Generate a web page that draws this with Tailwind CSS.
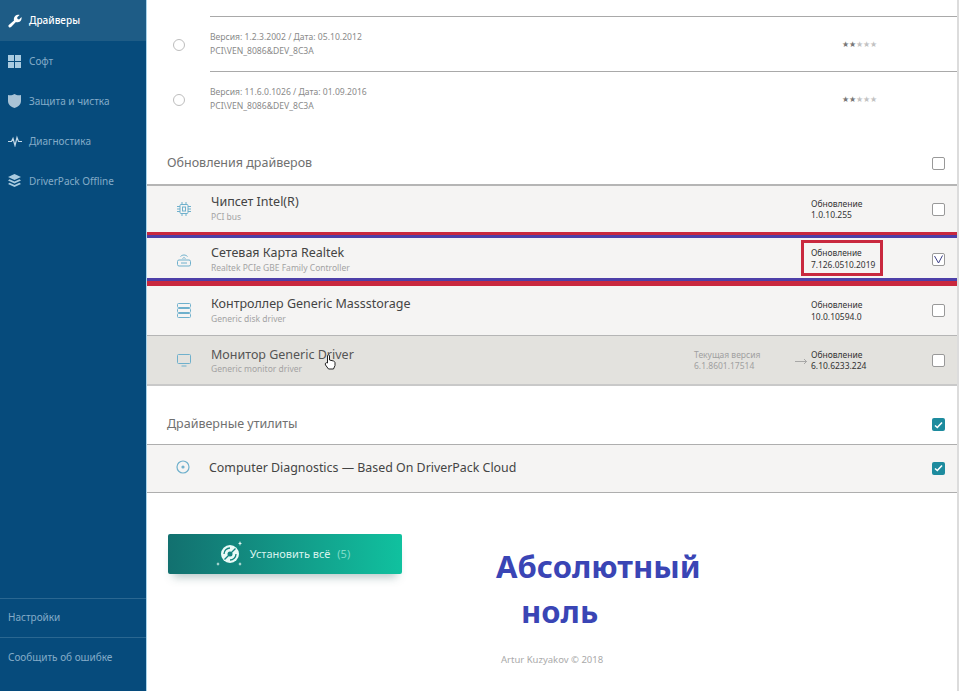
<!doctype html>
<html lang="ru">
<head>
<meta charset="utf-8">
<title>DriverPack</title>
<script src="https://cdn.jsdelivr.net/npm/@tailwindcss/browser@4"></script>
</head>
<body class="bg-white">
<div class="flex h-[691px] w-[959px] overflow-hidden font-['Noto_Sans',sans-serif]">

  <!-- sidebar -->
  <aside class="flex h-full w-[147px] shrink-0 flex-col border-r border-r-[#a9d3ea] bg-[#064b7c] text-[10px] text-[#84abc8]">
    <a class="flex h-[41px] items-center gap-[7px] bg-[#1e5c86] pl-[8px] font-medium text-white">
      <svg width="14" height="14" viewBox="0 0 14 14" fill="#fff"><path d="M1 13.2c-.8-.7-.8-1.500-.2-2.100L6 6.400C5.500 4.200 6.500 1.500 9.800.800c.7-.1 1.300 0 1.800.2L9.200 3.300l.3 1.700 1.600.4 2.400-2.400c.5 2.500-.9 5-3.700 5.300-.7.1-1.300 0-1.900-.2l-4.800 5c-.7.6-1.400.6-2.100.1z"/></svg>
      Драйверы
    </a>
    <a class="flex h-[40px] items-center gap-[8px] pl-[8px]">
      <svg width="13" height="13" viewBox="0 0 13 13" fill="#a9cbe0"><rect width="6" height="6"/><rect x="7" width="6" height="6"/><rect y="7" width="6" height="6"/><rect x="7" y="7" width="6" height="6"/></svg>
      Софт
    </a>
    <a class="flex h-[40px] items-center gap-[8px] pl-[8px]">
      <svg width="13" height="14" viewBox="0 0 13 14" fill="#a9c3d6"><path d="M0 1c2 .6 4.500.4 6.500-1 2 1.400 4.500 1.600 6.500 1v6c0 3.500-3 6-6.500 7C3 13 0 10.500 0 7z"/></svg>
      Защита и чистка
    </a>
    <a class="flex h-[40px] items-center gap-[7px] pl-[8px]">
      <svg width="14" height="12" viewBox="0 0 14 12" fill="none" stroke="#c3d9e8" stroke-width="1.200"><path d="M0 6.500h3.500l1.500-3 2 7 2-8 1.500 4H14"/></svg>
      Диагностика
    </a>
    <a class="flex h-[40px] items-center gap-[8px] pl-[8px]">
      <svg width="13" height="14" viewBox="0 0 13 14" fill="#a9cbe0"><path d="M6.500 0 13 3 6.500 6 0 3z"/><path d="M1.500 5.300 6.500 7.600l5-2.300L13 6.500 6.500 9.500 0 6.500z"/><path d="M1.500 8.800 6.500 11.100l5-2.300L13 10 6.500 13 0 10z"/></svg>
      DriverPack Offline
    </a>
    <div class="mt-auto flex h-[39px] items-center border-t border-[#2a6791] pb-[2px] pl-[8px]">Настройки</div>
    <div class="flex h-[40px] items-center border-t border-[#2a6791] pl-[8px]">Сообщить об ошибке</div>
    <div class="h-[14px]"></div>
  </aside>

  <!-- content -->
  <main class="flex h-full w-[810px] shrink-0 flex-col">
    <div class="h-[16px]"></div>

    <!-- driver versions -->
    <div class="relative flex h-[55px] items-center border-t border-[#a9a9a9] ml-[63px]">
      <span class="absolute left-[-37px] top-[22px] size-[12px] rounded-full border border-[#bdbdbd]"></span>
      <div class="text-[8.6px] leading-[14px] text-[#8a8a8a]">
        <div>Версия: 1.2.3.2002 / Дата: 05.10.2012</div>
        <div>PCI\VEN_8086&amp;DEV_8C3A</div>
      </div>
      <div class="ml-auto mr-[80px] flex text-[8px] leading-none text-[#c2c2c2]"><span class="text-[#777]">★★</span>★★★</div>
    </div>
    <div class="relative flex h-[55px] items-center border-t border-[#a9a9a9] ml-[63px]">
      <span class="absolute left-[-37px] top-[22px] size-[12px] rounded-full border border-[#bdbdbd]"></span>
      <div class="text-[8.6px] leading-[14px] text-[#8a8a8a]">
        <div>Версия: 11.6.0.1026 / Дата: 01.09.2016</div>
        <div>PCI\VEN_8086&amp;DEV_8C3A</div>
      </div>
      <div class="ml-auto mr-[80px] flex text-[8px] leading-none text-[#c2c2c2]"><span class="text-[#777]">★★</span>★★★</div>
    </div>

    <!-- updates -->
    <div class="mt-[3px] flex h-[55px] items-center justify-between pl-[20px] pr-[12px] pt-[14px] text-[12.5px] text-[#707070]">
      Обновления драйверов
      <span class="size-[13px] rounded-[2px] border border-[#999] bg-white"></span>
    </div>

    <div class="flex h-[48px] items-center border-t-2 border-[#b5b5b5] bg-[#f5f4f3]">
      <div class="flex w-[64px] justify-center pl-[10px]">
        <svg width="14" height="14" viewBox="0 0 14 14" fill="none" stroke="#6fb0cc" stroke-width="1"><rect x="3" y="2.500" width="8" height="9" rx="1"/><rect x="5.500" y="5" width="3" height="4"/><path d="M0 4.500h3M0 7h3M0 9.500h3M11 4.500h3M11 7h3M11 9.500h3M5 0v2.500M9 0v2.500M5 11.500V14M9 11.500V14"/></svg>
      </div>
      <div class="mb-[3px] w-[600px]">
        <div class="text-[12.5px] leading-[18px] text-[#444]">Чипсет Intel(R)</div>
        <div class="text-[8.5px] leading-[12px] text-[#a3a3a3]">PCI bus</div>
      </div>
      <div class="text-[8.5px] leading-[11.500px] text-[#333]"><div>Обновление</div><div>1.0.10.255</div></div>
      <span class="ml-auto mr-[12px] size-[13px] rounded-[2px] border border-[#999] bg-white"></span>
    </div>

    <div class="h-[3px] bg-[#c9283e]"></div>
    <div class="h-[3px] bg-[#4d3fa8]"></div>
    <div class="relative flex h-[40px] items-center bg-[#f5f4f3] pt-[2px]">
      <div class="flex w-[64px] justify-center pl-[10px]">
        <svg width="14" height="16" viewBox="0 0 14 16" fill="none" stroke="#6fb0cc" stroke-width="1"><rect x=".5" y="9" width="13" height="6" rx="1.500"/><path d="M4 12h6M3.500 5.500c2-2 5-2 7 0M5.500 7.500c1-1 2-1 3 0"/></svg>
      </div>
      <div class="w-[600px]">
        <div class="text-[12.5px] leading-[18px] text-[#444]">Сетевая Карта Realtek</div>
        <div class="text-[8.5px] leading-[12px] text-[#a3a3a3]">Realtek PCIe GBE Family Controller</div>
      </div>
      <div class="relative z-10 -ml-[10px] -mt-[2px] w-[82px] whitespace-nowrap border-[3px] border-[#c9283e] pb-[3px] pl-[7px] pt-[4px] text-[8.4px] leading-[11.500px] text-[#333]"><div>Обновление</div><div>7.126.0510.2019</div></div>
      <span class="ml-auto mr-[12px] flex size-[13px] items-center justify-center rounded-[2px] border border-[#999] bg-white">
        <svg width="9" height="9" viewBox="0 0 9 9" fill="none" stroke="#3d3f88" stroke-width="1"><path d="M.5 1 4.500 8 8.500 .5"/></svg>
      </span>
    </div>
    <div class="h-[3px] bg-[#4d3fa8]"></div>
    <div class="h-[5px] bg-[#c9283e]"></div>

    <div class="flex h-[50px] items-center border-b border-[#b5b5b5] bg-[#f5f4f3]">
      <div class="flex w-[64px] justify-center pl-[10px]">
        <svg width="14" height="15" viewBox="0 0 14 15" fill="none" stroke="#6fb0cc" stroke-width="1"><rect x=".5" y=".5" width="13" height="4" rx="1"/><rect x=".5" y="5.500" width="13" height="4" rx="1"/><rect x=".5" y="10.500" width="13" height="4" rx="1"/></svg>
      </div>
      <div class="mb-[2px] w-[600px]">
        <div class="text-[12.5px] leading-[18px] text-[#444]">Контроллер Generic Massstorage</div>
        <div class="text-[8.5px] leading-[12px] text-[#a3a3a3]">Generic disk driver</div>
      </div>
      <div class="text-[8.5px] leading-[11.500px] text-[#333]"><div>Обновление</div><div>10.0.10594.0</div></div>
      <span class="ml-auto mr-[12px] size-[13px] rounded-[2px] border border-[#999] bg-white"></span>
    </div>

    <div class="relative flex h-[50px] items-center border-b-2 border-[#c9c9c9] bg-[#e3e2de]">
      <div class="flex w-[64px] justify-center pl-[10px]">
        <svg width="14" height="14" viewBox="0 0 14 14" fill="none" stroke="#6fb0cc" stroke-width="1"><rect x=".5" y="1.500" width="13" height="9" rx="1"/><path d="M4.500 13h5"/></svg>
      </div>
      <div class="w-[483px]">
        <div class="text-[12.5px] leading-[17px] text-[#555]">Монитор Generic Driver</div>
        <div class="text-[8.5px] leading-[12px] text-[#a3a3a3]">Generic monitor driver</div>
      </div>
      <div class="w-[101px] text-[8.5px] leading-[11.500px] text-[#a0a0a0]"><div>Текущая версия</div><div>6.1.8601.17514</div></div>
      <svg class="mr-[4px] mt-[2px]" width="12" height="7" viewBox="0 0 12 7" fill="none" stroke="#999" stroke-width=".8"><path d="M0 3.500h11.500M9 1l2.500 2.500L9 6"/></svg>
      <div class="text-[8.5px] leading-[11.500px] text-[#333]"><div>Обновление</div><div>6.10.6233.224</div></div>
      <span class="ml-auto mr-[12px] size-[13px] rounded-[2px] border border-[#999] bg-white"></span>
      <svg class="absolute left-[177px] top-[18px]" width="12" height="16" viewBox="0 0 12 16" fill="#fff" stroke="#222" stroke-width="1"><path d="M3.500 9V1.800c0-1.300 2-1.300 2 0V6l4 1c1 .3 1.500 1 1.500 2v2.500L9.500 15h-5L1.500 11c-1-1.500.8-3 2-2z"/></svg>
    </div>

    <!-- utilities -->
    <div class="mt-[13px] flex h-[45px] items-center justify-between pl-[20px] pr-[12px] pt-[6px] text-[12.5px] text-[#707070]">
      Драйверные утилиты
      <span class="flex size-[13px] items-center justify-center rounded-[2px] bg-[#1d8b9e]">
        <svg width="9" height="8" viewBox="0 0 9 8" fill="none" stroke="#fff" stroke-width="1.600"><path d="M1 4.500 3.300 6.500 8 1.500"/></svg>
      </span>
    </div>
    <div class="flex h-[49px] items-center border-y border-[#aeaeae] bg-[#f5f4f3] pb-[1px]">
      <div class="flex w-[62px] justify-center pl-[10px] pb-[2px]">
        <svg width="14" height="14" viewBox="0 0 14 14" fill="none" stroke="#6fb0cc" stroke-width="1.200"><circle cx="7" cy="7" r="6"/><circle cx="7" cy="7" r="1" fill="#6fb0cc"/></svg>
      </div>
      <div class="text-[12.4px] text-[#444]">Computer Diagnostics — Based On DriverPack Cloud</div>
      <span class="ml-auto mr-[12px] flex size-[13px] items-center justify-center rounded-[2px] bg-[#1d8b9e]">
        <svg width="9" height="8" viewBox="0 0 9 8" fill="none" stroke="#fff" stroke-width="1.600"><path d="M1 4.500 3.300 6.500 8 1.500"/></svg>
      </span>
    </div>

    <!-- install -->
    <div class="flex">
      <button class="ml-[21px] mt-[41px] flex h-[40px] w-[234px] items-center justify-center gap-[5px] rounded-[2px] bg-gradient-to-r from-[#12706f] to-[#10c19f] pr-[5px] text-[11px] text-[#d8f3ee] shadow-[0_8px_10px_-5px_rgba(40,90,90,0.35)]">
        <svg width="30" height="28" viewBox="0 0 30 28" fill="#eafaf6"><circle cx="15" cy="14" r="9"/><circle cx="15" cy="14" r="2.500" fill="#14857f"/><path d="M9 14a6 6 0 0 1 6-6M21 14a6 6 0 0 1-6 6M9.500 19.500 20.500 8.500" fill="none" stroke="#14857f" stroke-width="1.300"/><path d="M25 1l.6 1.800L27 3.500l-1.400.6L25 6l-.6-1.900L23 3.500l1.400-.7zM3 22l.5 1.400 1.300.5-1.300.5L3 26l-.5-1.600-1.300-.5 1.300-.5zM25 22l.5 1.400 1.300.5-1.300.5L25 26l-.5-1.600-1.300-.5 1.300-.5z"/></svg>
        <span>Установить всё <span class="ml-[4px] text-[#7fdcc8]">(5)</span></span>
      </button>
      <div class="ml-[94px] mt-[51px]">
        <div class="text-[31px] font-bold leading-[45px] text-[#3a45b5]">Абсолютный</div>
        <div class="pl-[25px] text-[31px] font-bold leading-[45px] text-[#3a45b5]">ноль</div>
        <div class="pl-[5px] pt-[19px] text-[9.5px] text-[#aaa]">Artur Kuzyakov © 2018</div>
      </div>
    </div>
  </main>

  <div class="h-full w-[2px] shrink-0 bg-[#dcdcdc]"></div>
</div>
</body>
</html>
